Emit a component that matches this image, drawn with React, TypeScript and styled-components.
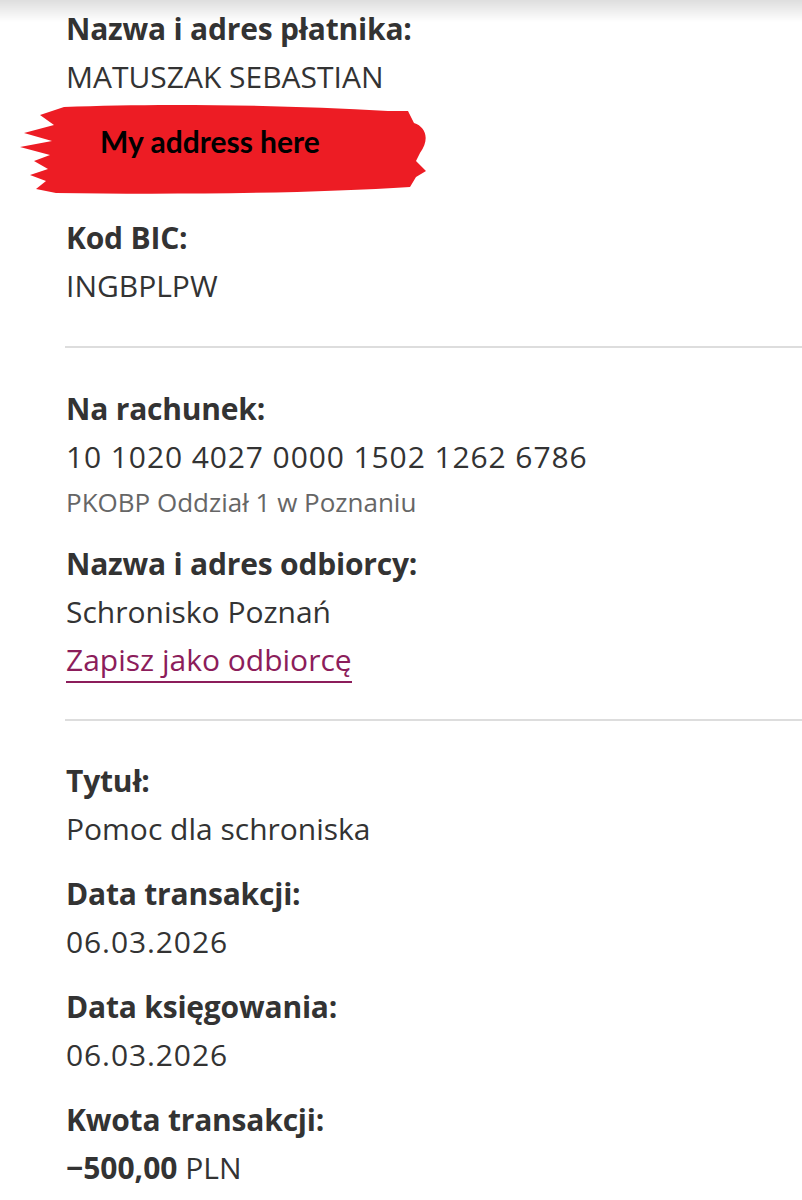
import React from "react";
import styled, { createGlobalStyle } from "styled-components";

const Global = createGlobalStyle`
  html, body { margin: 0; padding: 0; background: #ffffff; }
  body { font-family: "Open Sans", "Noto Sans", sans-serif; color: #333333; }
`;

const Page = styled.div`
  position: relative;
  width: 802px;
  min-height: 1200px;
  background: #ffffff;
  overflow: hidden;
  &::before {
    content: "";
    position: absolute;
    left: 0; right: 0; top: 0;
    height: 22px;
    background: linear-gradient(to bottom, rgba(0,0,0,0.13), rgba(0,0,0,0));
    pointer-events: none;
  }
`;

const Section = styled.section<{ $top: number; $bottom: number }>`
  margin-left: 66px;
  padding-top: ${(p) => p.$top}px;
  padding-bottom: ${(p) => p.$bottom}px;
  display: flex;
  flex-direction: column;
  gap: 17px;
`;

const Divider = styled.hr`
  margin: 0 0 0 65px;
  border: none;
  height: 2px;
  background: #dddddd;
`;

const Field = styled.div`
  display: flex;
  flex-direction: column;
`;

const Label = styled.div`
  font-size: 30px;
  line-height: 48px;
  font-weight: 700;
  color: #333333;
  letter-spacing: -0.2px;
`;

const Value = styled.div<{ $digits?: boolean }>`
  font-size: 30px;
  line-height: 48px;
  font-weight: 400;
  color: #333333;
  letter-spacing: ${(p) => (p.$digits ? "0.9px" : "0")};
`;

const Sub = styled.div`
  font-size: 26px;
  line-height: 42px;
  color: #666666;
`;

const Link = styled.a`
  align-self: flex-start;
  font-size: 30px;
  line-height: 42px;
  padding-top: 3px;
  margin-bottom: 3px;
  color: #8c1d5b;
  text-decoration: none;
  border-bottom: 2px solid #8c1d5b;
`;

const Strong = styled.span`
  font-weight: 700;
`;

const Mask = styled.div`
  position: relative;
  height: 96px;
`;

const MaskArt = styled.svg`
  position: absolute;
  left: -46px;
  top: -4px;
  width: 412px;
  height: 100px;
`;

const MaskText = styled.span`
  position: absolute;
  left: 34px;
  top: 22px;
  font-family: "Lato", "Open Sans", sans-serif;
  font-weight: 700;
  font-size: 30px;
  line-height: 36px;
  color: #000000;
`;

export default function App() {
  return (
    <Page>
      <Global />
      <Section $top={5} $bottom={36}>
        <Field>
          <Label>Nazwa i adres płatnika:</Label>
          <Value>MATUSZAK SEBASTIAN</Value>
          <Mask>
            <MaskArt viewBox="0 0 412 100">
              <path
                d="M44 10 C140 6 260 8 368 14 L388 14 L394 26 C406 30 410 42 400 56 L396 64 L406 74 L396 80 L390 90 C300 96 160 98 36 96 L16 92 L26 84 L10 78 L28 72 L14 64 L30 58 L0 50 L32 44 L4 36 L34 28 L20 18 Z"
                fill="#ed1c24"
              />
            </MaskArt>
            <MaskText>My address here</MaskText>
          </Mask>
        </Field>
        <Field>
          <Label>Kod BIC:</Label>
          <Value>INGBPLPW</Value>
        </Field>
      </Section>
      <Divider />
      <Section $top={37} $bottom={33}>
        <Field>
          <Label>Na rachunek:</Label>
          <Value $digits>10 1020 4027 0000 1502 1262 6786</Value>
          <Sub>PKOBP Oddział 1 w Poznaniu</Sub>
        </Field>
        <Field>
          <Label>Nazwa i adres odbiorcy:</Label>
          <Value>Schronisko Poznań</Value>
          <Link href="#">Zapisz jako odbiorcę</Link>
        </Field>
      </Section>
      <Divider />
      <Section $top={36} $bottom={20}>
        <Field>
          <Label>Tytuł:</Label>
          <Value>Pomoc dla schroniska</Value>
        </Field>
        <Field>
          <Label>Data transakcji:</Label>
          <Value $digits>06.03.2026</Value>
        </Field>
        <Field>
          <Label>Data księgowania:</Label>
          <Value $digits>06.03.2026</Value>
        </Field>
        <Field>
          <Label>Kwota transakcji:</Label>
          <Value>
            <Strong>−500,00</Strong> PLN
          </Value>
        </Field>
      </Section>
    </Page>
  );
}
